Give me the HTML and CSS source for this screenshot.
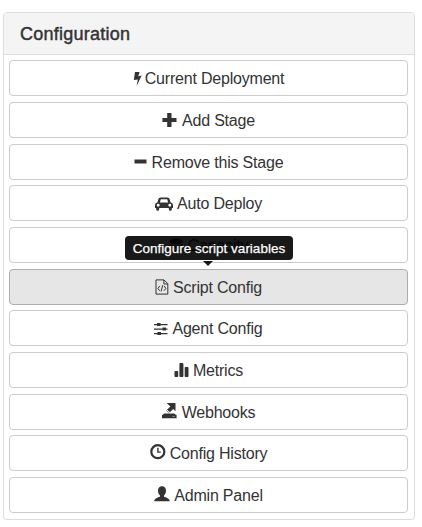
FILE: index.html
```html
<!DOCTYPE html>
<html lang="en">
<head>
<meta charset="utf-8">
<title>Configuration</title>
<link rel="stylesheet" href="styles.css">
</head>
<body>
<section class="panel">
  <h4 class="panel-heading">Configuration</h4>
  <div class="panel-body">
    <button class="btn"><svg class="icon" width="12" height="16" viewBox="0 0 12 16"><path d="M2 1h4.600L5.200 5.200l3.500-.6L3.600 15l1.200-6.600L.8 9z"/></svg><span>Current Deployment</span></button>
    <button class="btn"><svg class="icon" width="20" height="16" viewBox="0 0 20 16"><path d="M5.200 1h4.300v4.900h5v4.200h-5V15H5.200v-4.900H.4V5.900h4.800z"/></svg><span>Add Stage</span></button>
    <button class="btn"><svg class="icon" width="18" height="16" viewBox="0 0 18 16"><path d="M.5 5.500h12v4H.500z"/></svg><span>Remove this Stage</span></button>
    <button class="btn"><svg class="icon" width="22" height="16" viewBox="0 0 22 16"><path fill-rule="evenodd" d="M5.600 1.500h6.800q1.700 0 2.200 1.500l1 3.600Q18 7 18 9.200V12h-1.200v1.300q0 1.500-1.500 1.500t-1.500-1.500V12H4.200v1.300q0 1.500-1.500 1.500t-1.500-1.500V12H0V9.200Q0 7 2.400 6.600l1-3.600q.5-1.500 2.200-1.500zm.2 1.700L4.900 6.500h8.200l-.9-3.300zM3.200 7.800a1.450 1.450 0 1 0 0 2.900 1.450 1.450 0 0 0 0-2.900zm11.600 0a1.450 1.450 0 1 0 0 2.900 1.450 1.450 0 0 0 0-2.900z"/></svg><span>Auto Deploy</span></button>
    <button class="btn"><svg class="icon" width="19" height="16" viewBox="0 0 19 16"><ellipse cx="7" cy="3.500" rx="6.500" ry="2.700"/><path d="M.5 6q6.500 3 13 0v3q-6.500 3.500-13 0zM.5 10.500q6.500 3 13 0v2q-6.500 4-13 0z"/></svg><span>Capacity</span></button>
    <div class="tip-anchor">
      <button class="btn btn-active"><svg class="icon" width="18" height="16" viewBox="0 0 18 16"><path class="line" d="M1 .9h8l3.800 3.800v10.400H1zM8.900 1v4h3.900"/><path class="line" d="M4.800 6.900 2.900 9.400l1.900 2.400M9 6.900l1.900 2.500L9 11.800M7.700 6.200l-1.600 6.300"/></svg><span>Script Config</span></button>
      <div class="tooltip">Configure script variables</div>
    </div>
    <button class="btn"><svg class="icon" width="18" height="16" viewBox="0 0 18 16"><path d="M0 3h13.500v1.200H0zM0 7.500h13.500v1.200H0zM0 12h13.500v1.200H0zM3 2h3.500v3H3zM8.500 6.500H12v3H8.500zM3.500 11H7v3H3.500z"/></svg><span>Agent Config</span></button>
    <button class="btn"><svg class="icon" width="19" height="16" viewBox="0 0 19 16"><rect x=".5" y="8" width="3.700" height="6" rx=".8"/><rect x="5.400" y="0" width="4" height="14" rx="1"/><rect x="10.700" y="4" width="3.800" height="10" rx=".8"/></svg><span>Metrics</span></button>
    <button class="btn"><svg class="icon raised" width="20" height="16" viewBox="0 0 20 16"><path d="M4.600 0h8.900v8.300l-2.300-2.200-4 3.900-3-2.600 4.200-3.900zM2.200 10.600h9.900l2.100 1.300H.4zM0 12.100h14.600v3.200H0z"/><path class="gap" d="M3.800 6.200 8.500 10"/><path class="gap thin" d="M10.500 13.400h2"/></svg><span>Webhooks</span></button>
    <button class="btn"><svg class="icon raised" width="20" height="16" viewBox="0 0 20 16"><circle class="ring" cx="7.800" cy="7.700" r="6.500"/><path class="hand" d="M7.900 3.800v4.300h2.900"/></svg><span>Config History</span></button>
    <button class="btn"><svg class="icon raised" width="20" height="16" viewBox="0 0 20 16"><path d="M8 .3c2.500 0 4 1.700 4 4.200 0 2-.8 4-2 5v1.300c2 .8 5.700 1.500 5.700 4.500H.2c0-3 3.800-3.700 5.800-4.500V9.500c-1.200-1-2-3-2-5C4 2 5.500.3 8 .3z"/></svg><span>Admin Panel</span></button>
  </div>
</section>
</body>
</html>
```
FILE: styles.css
```css
* { box-sizing: border-box; }

body {
  margin: 0;
  padding: 12px 7px 0 3px;
  background: #fff;
  color: #333;
  font-family: "Liberation Sans", Arial, sans-serif;
}

.panel {
  height: 508px;
  border: 1px solid #ddd;
  border-radius: 4px;
  box-shadow: 0 1px 1px rgba(0, 0, 0, .05);
}

.panel-heading {
  height: 42px;
  margin: 0;
  padding: 0 16px;
  border-bottom: 1px solid #ddd;
  border-radius: 3px 3px 0 0;
  background: #f4f4f4;
  font-size: 18px;
  font-weight: 400;
  -webkit-text-stroke: .45px #333;
  line-height: 42px;
  letter-spacing: .25px;
}

.panel-body {
  display: flex;
  flex-direction: column;
  gap: 5.700px;
  padding: 5.300px 6px 0 5px;
}

.btn {
  display: flex;
  align-items: center;
  justify-content: center;
  width: 100%;
  height: 36px;
  padding: 1px 0 0;
  border: 1px solid #ccc;
  border-radius: 4px;
  background: #fff;
  color: #333;
  font: 16px/20px "Liberation Sans", Arial, sans-serif;
  letter-spacing: -.2px;
}

.btn span { padding-top: 1px; }

.btn-active {
  border-color: #adadad;
  background: #e6e6e6;
}

.icon {
  flex: none;
  fill: #333;
}

.raised { margin-bottom: 3px; }

.line { fill: none; stroke: #333; stroke-width: 1; }
.gap { fill: none; stroke: #fff; stroke-width: 1; }
.thin { stroke-width: .5; }
.ring { fill: none; stroke: #333; stroke-width: 2.200; }
.hand { fill: none; stroke: #333; stroke-width: 1.400; }

.tip-anchor { position: relative; }

.tooltip {
  position: absolute;
  bottom: 45px;
  left: 116px;
  width: 168px;
  height: 24px;
  border-radius: 4px;
  background: rgba(0, 0, 0, .9);
  color: #fff;
  font-size: 13.500px;
  -webkit-text-stroke: .25px #fff;
  line-height: 25px;
  text-align: center;
  white-space: nowrap;
}

.tooltip::after {
  content: "";
  position: absolute;
  top: 25px;
  left: 78px;
  border: 5px solid transparent;
  border-top-color: rgba(0, 0, 0, .9);
  border-bottom: 0;
}
```
